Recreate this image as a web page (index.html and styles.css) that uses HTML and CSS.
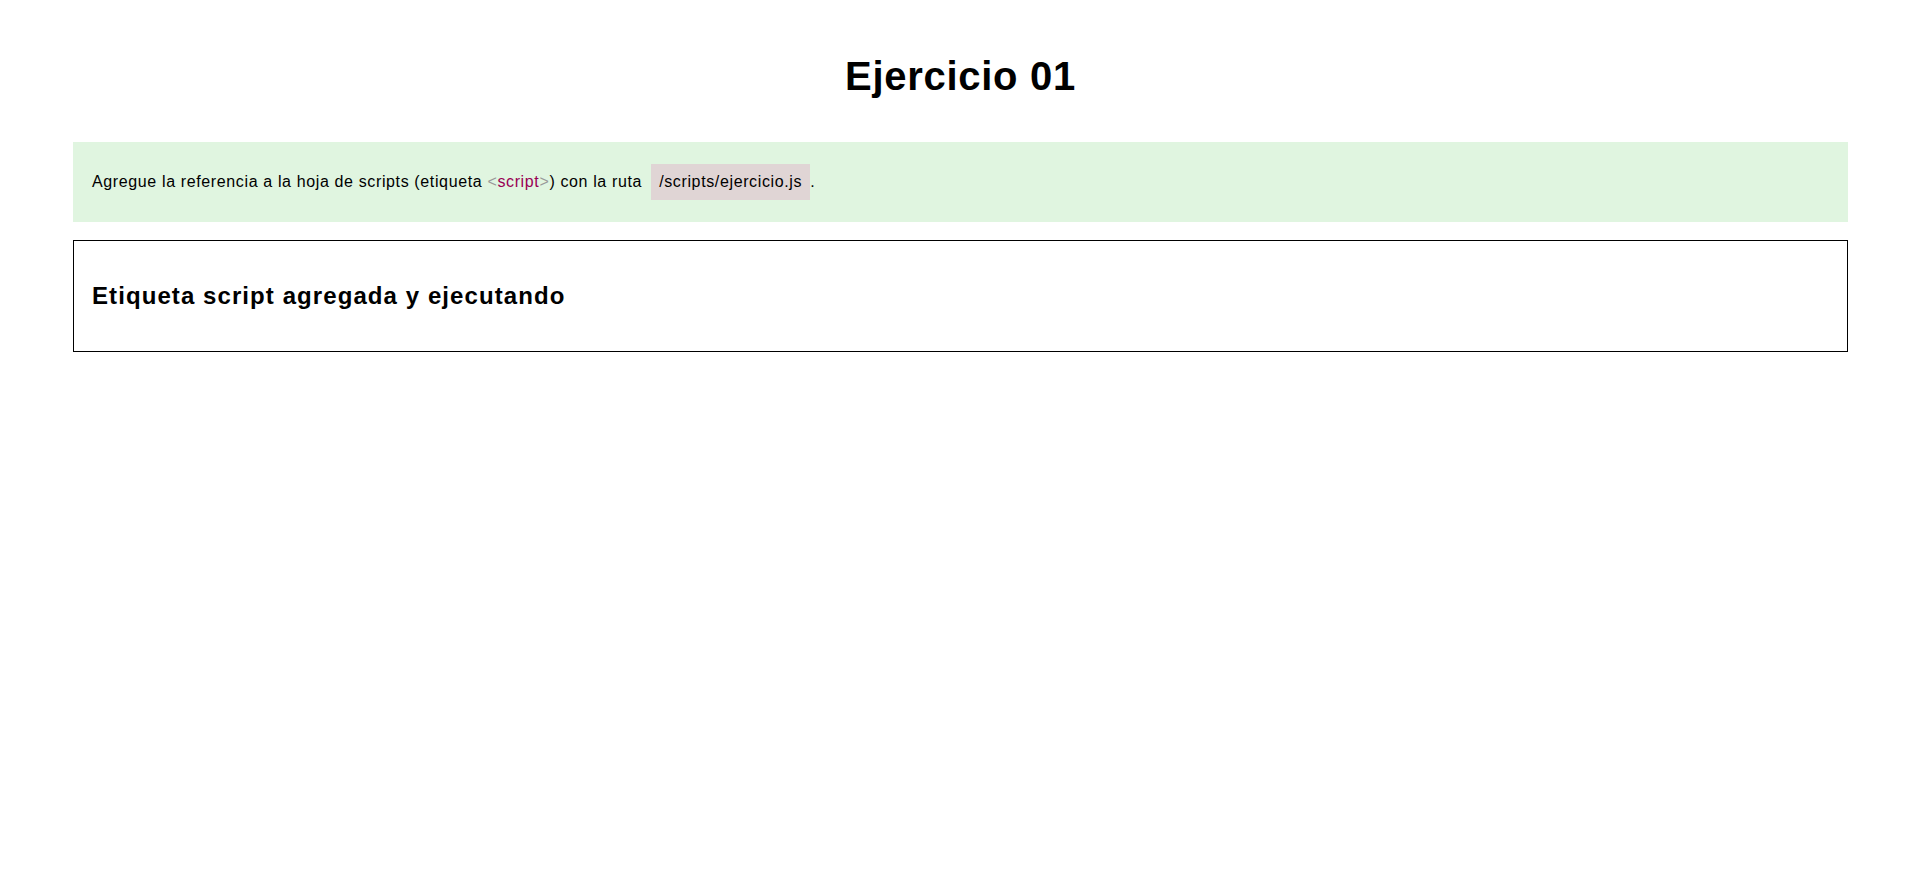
FILE: index.html
```html
<!DOCTYPE html>
<html lang="es">
<head>
<meta charset="utf-8">
<title>Ejercicio 01</title>
<link rel="stylesheet" href="styles.css">
</head>
<body>
<main class="page">
  <h1 class="title">Ejercicio 01</h1>
  <div class="instructions">
    <p class="instructions-text">Agregue la referencia a la hoja de scripts (etiqueta <span class="tag"><span class="punct">&lt;</span>script<span class="punct">&gt;</span></span>) con la ruta <code class="path">/scripts/ejercicio.js</code>.</p>
  </div>
  <div class="result">
    <h3 class="result-title">Etiqueta script agregada y ejecutando</h3>
  </div>
</main>
</body>
</html>
```

FILE: styles.css
```css
html, body {
  margin: 0;
  padding: 0;
  background: #ffffff;
}

body {
  font-family: "Liberation Sans", Arial, sans-serif;
  color: #000000;
}

.page {
  margin: 0 72px 0 73px;
  padding-top: 53px;
}

.title {
  margin: 0 0 43px;
  font-size: 40px;
  font-weight: bold;
  line-height: 46px;
  letter-spacing: 0.7px;
  text-align: center;
}

.instructions {
  background: #e0f5e0;
  padding: 22px 19px;
  margin-bottom: 18px;
}

.instructions-text {
  margin: 0;
  font-size: 16px;
  line-height: 36px;
  letter-spacing: 0.63px;
}

.tag {
  color: #990055;
}

.punct {
  color: #999999;
}

.path {
  display: inline-block;
  font-family: "Liberation Sans", Arial, sans-serif;
  font-size: 16px;
  line-height: 36px;
  padding: 0 8px;
  margin-left: 4px;
  background: #e0d5d5;
  vertical-align: top;
}

.result {
  border: 1px solid #000000;
  padding: 41px 18px;
}

.result-title {
  margin: 0;
  font-size: 24px;
  font-weight: bold;
  line-height: 28px;
  letter-spacing: 1.08px;
}
```
